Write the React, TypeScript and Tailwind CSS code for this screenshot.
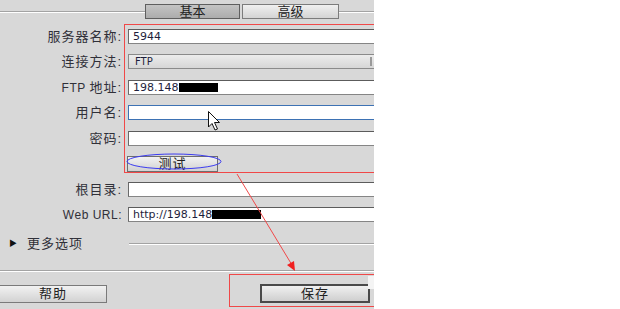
import React from 'react';

const cjk = "font-['Liberation_Sans','Noto_Sans_CJK_SC',sans-serif]";
const mono = "font-['DejaVu_Sans',sans-serif]";

function Field({ label, children }: { label: React.ReactNode; children?: React.ReactNode }) {
  return (
    <div className="flex items-center h-[15px]">
      <div className={`w-[122px] shrink-0 text-right text-[13px] leading-none tracking-[1px] text-[#303038] ${cjk}`}>
        {label}
      </div>
      <div className="ml-[6px] flex items-center">{children}</div>
    </div>
  );
}

function TextBox({ value, focused, mask }: { value?: string; focused?: boolean; mask?: number }) {
  return (
    <div
      className={`w-[260px] h-[15px] bg-white border flex items-center pl-[4px] ${
        focused ? 'border-[#3d72b4]' : 'border-[#858585] border-t-[#5c5c5c] border-l-[#6a6a6a]'
      }`}
    >
      <span className={`text-[11px] leading-none text-[#1e1e3c] ${mono}`}>{value}</span>
      {mask ? <span className="h-[9px] bg-black" style={{ width: mask }} /> : null}
    </div>
  );
}

function Etched({ className }: { className: string }) {
  return <div className={`h-[2px] border-t border-[#a3a3a3] border-b-white ${className}`} style={{ borderBottomWidth: 1 }} />;
}

export default function App() {
  return (
    <div className={`relative w-[620px] h-[309px] bg-white overflow-hidden ${cjk}`}>
      <div className="w-[374px] h-full bg-[#d8d8d8] overflow-hidden flex flex-col">
        {/* tabs */}
        <div className="flex items-center h-[15px] mt-[4px]">
          <Etched className="w-[145px]" />
          <div className="w-[95px] h-[15px] border border-[#5f5f5f] bg-gradient-to-b from-[#c4c4c4] to-[#acacac] flex items-center justify-center text-[13px] leading-none text-[#222]">
            基本
          </div>
          <div className="w-[2px]" />
          <div className="w-[97px] h-[15px] border border-[#7c7c7c] bg-gradient-to-b from-[#f0f0f0] to-[#d4d4d4] flex items-center justify-center text-[13px] leading-none text-[#222]">
            高级
          </div>
          <Etched className="flex-1" />
        </div>

        {/* fields */}
        <div className="flex flex-col gap-[10.5px] mt-[9.5px]">
          <Field label="服务器名称:">
            <TextBox value="5944" />
          </Field>
          <Field label="连接方法:">
            <div className="relative w-[260px] h-[15px] border border-[#8a8a8a] bg-gradient-to-b from-[#ececec] to-[#d6d6d6] flex items-center pl-[6px]">
              <span className={`text-[10px] leading-none text-[#1e1e3c] ${mono}`}>FTP</span>
              <span className="absolute left-[241px] top-[2px] w-[2px] h-[9px] border-x border-[#9a9a9a] bg-[#eeeeee]" />
            </div>
          </Field>
          <Field label={<><span className="text-[12px] tracking-[0.5px]">FTP </span>地址:</>}>
            <TextBox value="198.148" mask={39} />
          </Field>
          <Field label="用户名:">
            <TextBox focused />
          </Field>
          <Field label="密码:">
            <TextBox />
          </Field>
          <Field label="">
            <button className="-ml-[1px] w-[91px] h-[16px] border border-[#6e6e6e] bg-gradient-to-b from-[#f2f2f2] to-[#d2d2d2] text-[13px] leading-none text-[#222] tracking-[1px]">
              测试
            </button>
          </Field>
          <Field label="根目录:">
            <TextBox />
          </Field>
          <Field label={<span className="text-[12px] tracking-[0.5px]">Web URL:</span>}>
            <TextBox value="http://198.148" mask={49} />
          </Field>
        </div>

        {/* more options */}
        <div className="flex items-center h-[15px] mt-[14px]">
          <span className="ml-[9px] text-[8px] leading-none text-[#111]">▶</span>
          <span className="ml-[10px] text-[13px] leading-none tracking-[1px] text-[#303038]">更多选项</span>
          <Etched className="ml-[46px] flex-1" />
        </div>

        <Etched className="w-full mt-[19px]" />

        {/* bottom buttons */}
        <div className="flex items-center mt-[12px]">
          <button className="-ml-[1px] w-[108px] h-[18px] border border-[#7a7a7a] bg-gradient-to-b from-[#f2f2f2] to-[#d2d2d2] text-[13px] leading-none text-[#222] tracking-[1px]">
            帮助
          </button>
          <button className="ml-[153px] w-[110px] h-[19px] border-2 border-[#4a4a4a] bg-gradient-to-b from-[#f0f0f0] to-[#cfcfcf] text-[13px] leading-none text-[#222] tracking-[1px]">
            保存
          </button>
        </div>
      </div>

      {/* annotations, clipped to the dialog */}
      <div className="absolute left-0 top-0 w-[374px] h-[309px] overflow-hidden">
        <div className="absolute left-[124px] top-[24px] w-[260px] h-[149px] border border-[#f04848]" />
        <div className="absolute left-[229px] top-[274px] w-[160px] h-[33px] border border-[#f04848]" />
        <div className="absolute left-[368px] top-[276px] w-[6px] h-[13px] bg-[#f4f4f4]" />
        <svg className="absolute left-0 top-0" width="374" height="309">
          <ellipse cx="174" cy="161.5" rx="47" ry="7.5" fill="none" stroke="#3c3cf0" strokeWidth="1" />
          <line x1="237" y1="174" x2="292" y2="265" stroke="#f04848" strokeWidth="1" />
          <polygon points="295,271 287,265 294,261" fill="#f02020" />
          <path
            d="M208.5 111.5 L208.5 127 L212 123.5 L215 130 L217.5 129 L214.5 122.5 L219.5 122.5 Z"
            fill="#ffffff"
            stroke="#111"
            strokeWidth="1"
            strokeLinejoin="round"
          />
        </svg>
      </div>
    </div>
  );
}
